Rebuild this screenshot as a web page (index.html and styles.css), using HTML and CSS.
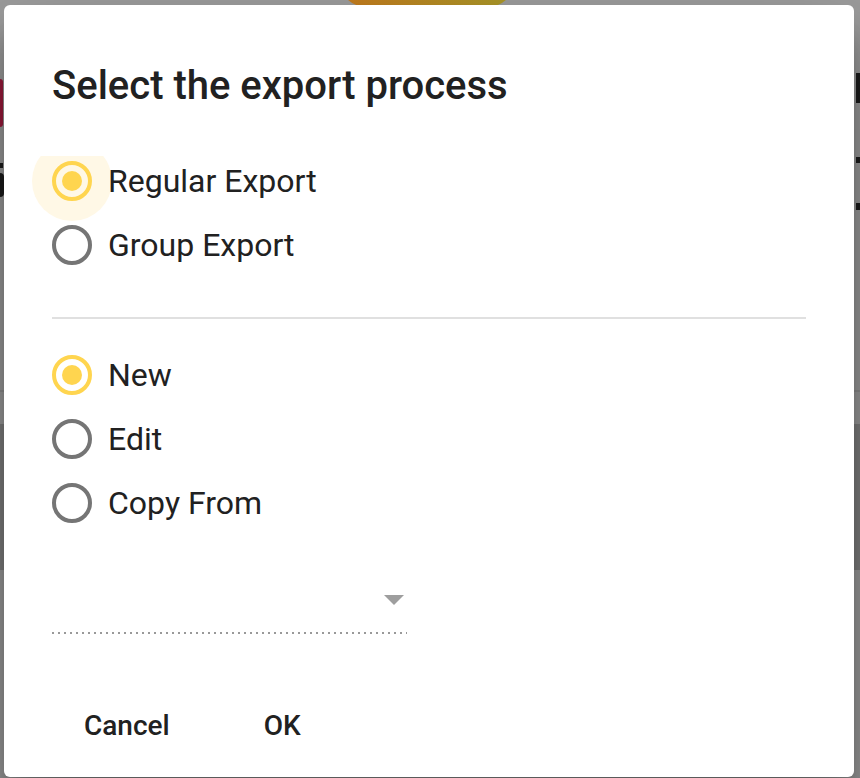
FILE: index.html
```html
<!DOCTYPE html>
<html lang="en">
<head>
<meta charset="utf-8">
<title>Select the export process</title>
<link rel="stylesheet" href="styles.css">
</head>
<body>
<div class="backdrop">
  <div class="hero">
    <div class="logo"></div>
    <span class="frag frag-red"></span>
    <span class="frag frag-l1"></span>
    <span class="frag frag-l2"></span>
    <span class="frag frag-r1"></span>
    <span class="frag frag-r2"></span>
    <span class="frag frag-r3"></span>
  </div>
  <div class="rule"></div>
  <div class="gap"></div>
  <div class="band"></div>
</div>

<div class="dialog" role="dialog" aria-labelledby="dlg-title">
  <h3 class="title" id="dlg-title">Select the export process</h3>

  <div class="group">
    <label class="radio checked hover">
      <span class="ring"><span class="dot"></span></span>
      <span class="label">Regular Export</span>
    </label>
    <label class="radio">
      <span class="ring"><span class="dot"></span></span>
      <span class="label">Group Export</span>
    </label>
  </div>

  <hr class="divider">

  <div class="group group-2">
    <label class="radio checked">
      <span class="ring"><span class="dot"></span></span>
      <span class="label">New</span>
    </label>
    <label class="radio">
      <span class="ring"><span class="dot"></span></span>
      <span class="label">Edit</span>
    </label>
    <label class="radio">
      <span class="ring"><span class="dot"></span></span>
      <span class="label">Copy From</span>
    </label>
  </div>

  <div class="select">
    <div class="select-field"><span class="arrow"></span></div>
    <div class="select-line"></div>
  </div>

  <div class="actions">
    <button class="btn">Cancel</button>
    <button class="btn">OK</button>
  </div>
</div>
</body>
</html>
```

FILE: styles.css
```css
* { box-sizing: border-box; }

html, body {
  margin: 0;
  padding: 0;
  width: 860px;
  height: 778px;
  overflow: hidden;
}

body {
  background: #9b9b9b;
  font-family: Roboto, "Liberation Sans", Arial, sans-serif;
  color: #212121;
  position: relative;
}

/* ---------- page behind the overlay ---------- */
.backdrop {
  display: flex;
  flex-direction: column;
}

.hero {
  height: 390px;
  position: relative;
  display: flex;
  justify-content: center;
}

.logo {
  width: 164px;
  height: 24px;
  margin-top: -14px;
  margin-left: -6px;
  border-radius: 0 0 40px 40px / 0 0 16px 16px;
  background: linear-gradient(to right, #c27a1d, #a89628);
}

.frag { position: absolute; display: block; }
.frag-red { left: 0; top: 79px; width: 3px; height: 48px; background: #9c1a3c; border-radius: 0 3px 3px 0; }
.frag-l1 { left: 0; top: 163px; width: 3px; height: 5px; background: #1c1c1c; }
.frag-l2 { left: 0; top: 173px; width: 4px; height: 24px; background: #1c1c1c; border-radius: 0 4px 4px 0; }
.frag-r1 { right: 0; top: 73px; width: 4px; height: 30px; background: #1c1c1c; }
.frag-r2 { right: 0; top: 157px; width: 4px; height: 6px; background: #1c1c1c; }
.frag-r3 { right: 0; top: 203px; width: 4px; height: 7px; background: #1c1c1c; }

.rule { height: 2px; background: #8d8d8d; }
.gap { height: 32px; }
.band { height: 146px; background: #7f7f7f; }

/* ---------- dialog ---------- */
.dialog {
  position: absolute;
  left: 4px;
  top: 5px;
  width: 850px;
  height: 772px;
  background: #fff;
  border-radius: 6px;
  box-shadow: 0 38px 76px rgba(0,0,0,0.3), 0 30px 24px rgba(0,0,0,0.22);
  padding: 61px 48px 0 48px;
  display: flex;
  flex-direction: column;
}

.title {
  margin: 0;
  font-size: 40px;
  line-height: 40px;
  font-weight: 500;
  color: #212121;
}

.group {
  margin-top: 43px;
  display: flex;
  flex-direction: column;
}

.group-2 { margin-top: 24px; }

.radio {
  position: relative;
  height: 64px;
  display: flex;
  align-items: center;
  gap: 16px;
  cursor: pointer;
}

.radio.hover::before {
  content: "";
  position: absolute;
  left: -20px;
  top: -8px;
  width: 80px;
  height: 80px;
  border-radius: 50%;
  background: #fff8e6;
  clip-path: inset(15px 0 0 0);
  z-index: 0;
}

.ring {
  position: relative;
  z-index: 1;
  width: 40px;
  height: 40px;
  flex: none;
  border: 4px solid #757575;
  border-radius: 50%;
  display: flex;
  align-items: center;
  justify-content: center;
}

.dot {
  width: 20px;
  height: 20px;
  border-radius: 50%;
  background: transparent;
}

.radio.checked .ring { border-color: #ffd54f; }
.radio.checked .dot { background: #ffd54f; }

.label {
  position: relative;
  z-index: 1;
  font-size: 32px;
  line-height: 40px;
  color: #212121;
}

.divider {
  margin: 40px 0 0 0;
  border: 0;
  height: 2px;
  background: #e0e0e0;
}

.select {
  margin-top: 33px;
  width: 355px;
  display: flex;
  flex-direction: column;
}

.select-field {
  height: 64px;
  display: flex;
  align-items: center;
  justify-content: flex-end;
  padding-right: 3px;
}

.arrow {
  width: 0;
  height: 0;
  border-left: 10px solid transparent;
  border-right: 10px solid transparent;
  border-top: 10px solid #9e9e9e;
}

.select-line {
  height: 2px;
  background-image: linear-gradient(to right, #999 2px, transparent 2px);
  background-size: 6px 2px;
  background-repeat: repeat-x;
}

.actions {
  margin-top: 55px;
  display: flex;
  gap: 30px;
}

.btn {
  height: 72px;
  padding: 0 32px;
  border: 0;
  background: transparent;
  font-family: Roboto, "Liberation Sans", Arial, sans-serif;
  font-size: 28px;
  font-weight: 500;
  color: #212121;
  cursor: pointer;
}
```
